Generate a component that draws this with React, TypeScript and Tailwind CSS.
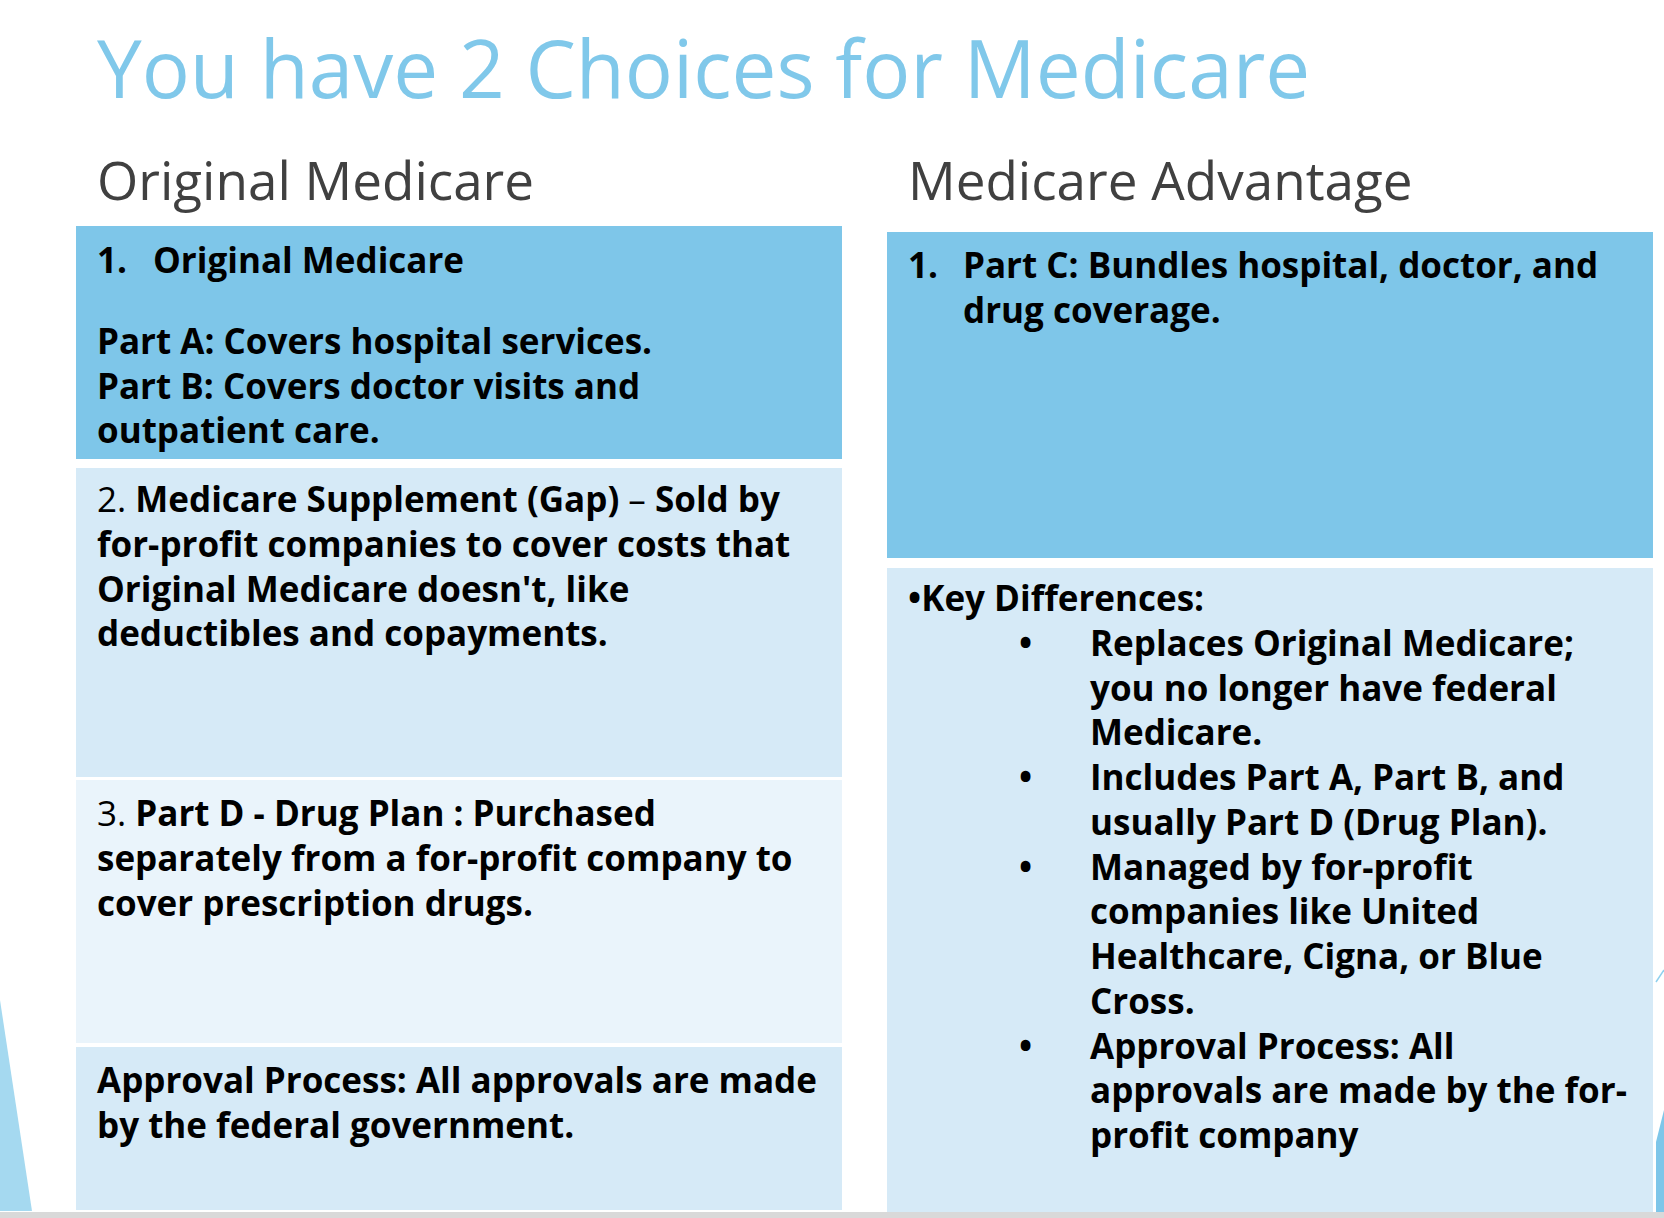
import type { ReactNode } from "react";

const Box = ({ className, children }: { className: string; children: ReactNode }) => (
  <div className={`pl-[21px] pr-3 text-[35px] font-bold leading-[44.75px] text-black ${className}`}>
    {children}
  </div>
);

const differences = [
  ["Replaces Original Medicare;", "you no longer have federal", "Medicare."],
  ["Includes Part A, Part B, and", "usually Part D (Drug Plan)."],
  ["Managed by for-profit", "companies like United", "Healthcare, Cigna, or Blue", "Cross."],
  ["Approval Process: All", "approvals are made by the for-", "profit company"],
];

export default function App() {
  return (
    <div className="relative h-[1218px] w-[1664px] overflow-hidden bg-white font-['Open_Sans','Noto_Sans',sans-serif]">
      {/* theme decorations at the slide edges */}
      <svg className="absolute left-0 top-[990px]" width="40" height="222" viewBox="0 0 40 222">
        <polygon points="0,10 32,221 0,221" fill="#A5D9F0" />
      </svg>
      <svg className="absolute right-0 top-[960px]" width="10" height="252" viewBox="0 0 10 252">
        <line x1="2" y1="22" x2="10" y2="10" stroke="#8FD0EE" strokeWidth="1.5" />
        <polygon points="10,150 2,182 2,252 10,252" fill="#7EC6E9" />
      </svg>

      <div className="flex h-[1212px] flex-col">
        <h1 className="h-[120px] pl-[97px] pt-[19px] text-[80px] font-normal leading-[96px] text-[#80C8EA]">
          You have 2 Choices for Medicare
        </h1>

        <div className="ml-[76px] grid grid-cols-[766px_766px] gap-x-[45px]">
          {/* Original Medicare */}
          <div className="flex flex-col">
            <h2 className="h-[106px] pl-[21px] pt-[28px] text-[53px] leading-[64px] text-[#404040]">
              Original Medicare
            </h2>
            <Box className="h-[233px] bg-[#7EC6E9] pt-[12px]">
              <div className="flex">
                <span className="w-[56px] shrink-0">1.</span>
                <span>Original Medicare</span>
              </div>
              <p className="mt-[36px]">
                Part A: Covers hospital services.
                <br />
                Part B: Covers doctor visits and
                <br />
                outpatient care.
              </p>
            </Box>
            <Box className="mt-[9px] h-[309px] bg-[#D6EAF7] pt-[9px]">
              <span className="font-normal">2. </span>Medicare Supplement (Gap) <span className="font-normal">–</span> Sold by
              <br />
              for-profit companies to cover costs that
              <br />
              Original Medicare doesn't, like
              <br />
              deductibles and copayments.
            </Box>
            <Box className="mt-[3px] h-[263px] bg-[#EAF4FB] pt-[11px]">
              <span className="font-normal">3. </span>Part D - Drug Plan : Purchased
              <br />
              separately from a for-profit company to
              <br />
              cover prescription drugs.
            </Box>
            <Box className="mt-[4px] h-[163px] bg-[#D6EAF7] pt-[11px]">
              Approval Process: All approvals are made
              <br />
              by the federal government.
            </Box>
          </div>

          {/* Medicare Advantage */}
          <div className="flex flex-col">
            <h2 className="h-[112px] pl-[21px] pt-[28px] text-[53px] leading-[64px] text-[#404040]">
              Medicare Advantage
            </h2>
            <Box className="h-[326px] bg-[#7EC6E9] pt-[11px]">
              <div className="flex">
                <span className="w-[55px] shrink-0">1.</span>
                <span>
                  Part C: Bundles hospital, doctor, and
                  <br />
                  drug coverage.
                </span>
              </div>
            </Box>
            <Box className="mt-[10px] h-[644px] bg-[#D6EAF7] pt-[8px]">
              <p>•Key Differences:</p>
              <ul className="pl-[111px]">
                {differences.map((lines) => (
                  <li key={lines[0]} className="flex">
                    <span className="w-[71px] shrink-0">•</span>
                    <span className="whitespace-nowrap">
                      {lines.map((line, i) => (
                        <span key={i} className="block">
                          {line}
                        </span>
                      ))}
                    </span>
                  </li>
                ))}
              </ul>
            </Box>
          </div>
        </div>
      </div>
      <div className="h-[6px] bg-[#D9D9D9]" />
    </div>
  );
}
